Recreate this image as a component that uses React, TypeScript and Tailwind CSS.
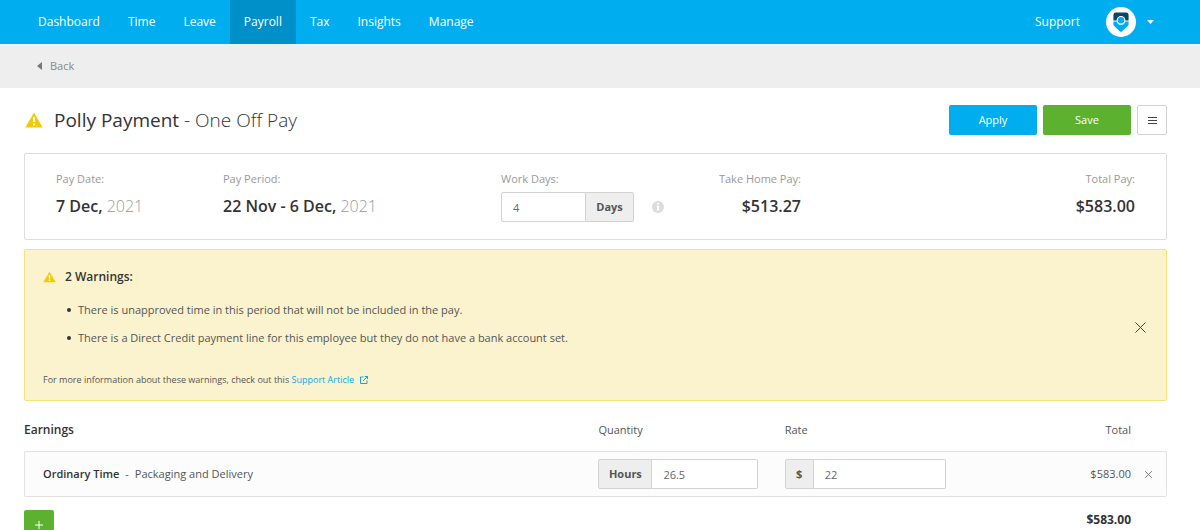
import React, { useState } from 'react';

const navItems = ['Dashboard', 'Time', 'Leave', 'Payroll', 'Tax', 'Insights', 'Manage'];

const warnings = [
  'There is unapproved time in this period that will not be included in the pay.',
  'There is a Direct Credit payment line for this employee but they do not have a bank account set.',
];

const WarningIcon: React.FC<{ className: string }> = ({ className }) => (
  <svg viewBox="0 0 18 16" className={className} aria-hidden="true">
    <path d="M9 0.6 17.7 15.4H0.3Z" fill="#f2cb05" />
    <path d="M8 5.2h2v4.8H8zM8 11.4h2v2H8z" fill="#fff" />
  </svg>
);

const CloseIcon: React.FC<{ className: string }> = ({ className }) => (
  <svg viewBox="0 0 10 10" className={className} aria-hidden="true">
    <path d="M0.4 0.4 9.6 9.6M9.6 0.4 0.4 9.6" fill="none" stroke="currentColor" vectorEffect="non-scaling-stroke" />
  </svg>
);

const Logo: React.FC = () => (
  <svg viewBox="0 0 30 30" className="size-[30px]" aria-hidden="true">
    <circle cx="15" cy="15" r="15" fill="#fff" />
    <path d="M7.4 13.4V8q0-2.4 2.4-2.4h10.4q2.4 0 2.4 2.4v5.4h-3.2a4.4 4.4 0 0 0-8.8 0Z" fill="#0a4766" />
    <path d="M7.4 14.4h3.3a4.4 4.4 0 0 0 8.6 0h3.3v2.8q0 1-.8 1.8l-5.6 5.3q-1.2 1-2.4 0L8.2 19q-.8-.8-.8-1.8Z" fill="#00aeef" />
    <circle cx="15" cy="13.2" r="3.2" fill="#00aeef" />
  </svg>
);

const Header: React.FC = () => (
  <header className="flex h-11 items-center justify-between bg-[#00aeef] pr-[46px] pl-6 text-white">
    <nav className="flex h-full text-[12px]">
      {navItems.map((item) => (
        <a
          key={item}
          href="#"
          className={`flex items-center px-[14px] ${item === 'Payroll' ? 'bg-[#0090c9]' : ''}`}
        >
          {item}
        </a>
      ))}
    </nav>
    <div className="flex items-center">
      <a href="#" className="mr-[26px] text-[12px]">Support</a>
      <button type="button" aria-label="Account" className="flex items-center gap-[11px]">
        <Logo />
        <svg viewBox="0 0 7 4" className="h-1 w-[7px]" aria-hidden="true">
          <path d="M0 0h7L3.5 4Z" fill="#fff" />
        </svg>
      </button>
    </div>
  </header>
);

const PaySummary: React.FC = () => (
  <section className="mt-[18px] grid h-[87px] grid-cols-[167fr_278fr_171fr_129fr_334fr] rounded-xs border border-[#dedede] px-[31px] pt-4 text-[16px] font-semibold text-[#333]">
    <div>
      <h2 className="text-[11px] leading-[18px] font-normal text-[#999]">Pay Date:</h2>
      <p className="mt-1.5 leading-6">
        7 Dec, <span className="font-light text-[#999]">2021</span>
      </p>
    </div>
    <div>
      <h2 className="text-[11px] leading-[18px] font-normal text-[#999]">Pay Period:</h2>
      <p className="mt-1.5 leading-6">
        22 Nov - 6 Dec, <span className="font-light text-[#999]">2021</span>
      </p>
    </div>
    <div className="text-[11px]">
      <label htmlFor="work-days" className="block leading-[18px] font-normal text-[#999]">Work Days:</label>
      <div className="mt-1 flex items-center">
        <input
          id="work-days"
          defaultValue="4"
          className="h-[30px] w-[85px] rounded-l-xs border border-[#d2d2d2] bg-white px-[11px] font-normal text-[#666]"
        />
        <span className="flex h-[30px] w-12 items-center justify-center rounded-r-xs border border-l-0 border-[#d2d2d2] bg-[#eee] font-bold text-[#555]">
          Days
        </span>
        <svg viewBox="0 0 12 12" className="ml-[18px] size-3" aria-hidden="true">
          <circle cx="6" cy="6" r="6" fill="#dcdcdc" />
          <path d="M5 2h2v1.6H5zM4.5 4.8H7v3.6h.6v1.1H4.4V8.4H5V5.8h-.5z" fill="#fff" />
        </svg>
      </div>
    </div>
    <div className="text-right">
      <h2 className="text-[11px] leading-[18px] font-normal text-[#999]">Take Home Pay:</h2>
      <p className="mt-1.5 leading-6">$513.27</p>
    </div>
    <div className="text-right">
      <h2 className="text-[11px] leading-[18px] font-normal text-[#999]">Total Pay:</h2>
      <p className="mt-1.5 leading-6">$583.00</p>
    </div>
  </section>
);

const Warnings: React.FC<{ onClose: () => void }> = ({ onClose }) => (
  <section className="mt-[9px] flex items-center justify-between rounded-xs border border-[#f6e27a] bg-[#fbf3cd] pt-4 pr-5 pb-3 pl-[18px]">
    <div>
      <h2 className="flex items-center gap-[9px] text-[12px] leading-[22px] font-semibold text-[#333]">
        <WarningIcon className="h-3 w-[13px]" />
        2 Warnings:
      </h2>
      <ul className="mt-3 flex flex-col gap-2 pl-6 text-[11px] leading-5 text-[#555]">
        {warnings.map((text) => (
          <li key={text} className="flex items-center gap-[7px]">
            <span className="size-1 rounded-full bg-[#333]" />
            {text}
          </li>
        ))}
      </ul>
      <p className="mt-6 flex items-center text-[9px] leading-4 text-[#555]">
        For more information about these warnings, check out this&nbsp;
        <a href="#" className="flex items-center gap-1.5 text-[#00aeef]">
          Support Article
          <svg viewBox="0 0 8 8" className="size-2" fill="none" stroke="currentColor" aria-hidden="true">
            <path d="M3.5 1H.5v6.5H7V4.5M4.8.5h2.7v2.7M7.5.5 3 5" />
          </svg>
        </a>
      </p>
    </div>
    <button type="button" aria-label="Dismiss warnings" onClick={onClose} className="text-[#444]">
      <CloseIcon className="size-[11px]" />
    </button>
  </section>
);

const Earnings: React.FC = () => (
  <table className="mt-[18px] w-full table-fixed border-separate border-spacing-0 text-[11px] text-[#555]">
    <colgroup>
      <col />
      <col className="w-[16.3%]" />
      <col className="w-[16.3%]" />
      <col className="w-[14%]" />
      <col className="w-9" />
    </colgroup>
    <thead>
      <tr className="h-8 text-left align-top leading-[22px]">
        <th className="text-[12px] font-semibold text-[#333]">Earnings</th>
        <th className="font-normal">Quantity</th>
        <th className="font-normal">Rate</th>
        <th className="text-right font-normal">Total</th>
        <th />
      </tr>
    </thead>
    <tbody>
      <tr className="h-[46px] *:border-y *:border-[#e2e2e2] *:bg-[#fcfcfc]">
        <td className="rounded-l-xs border-l pl-[18px]">
          <span className="font-semibold text-[#333]">Ordinary Time</span>
          <span className="mx-1.5">-</span>
          Packaging and Delivery
        </td>
        <td>
          <div className="flex">
            <label
              htmlFor="hours"
              className="flex h-[30px] w-[54px] items-center justify-center rounded-l-xs border border-[#d2d2d2] bg-[#eee] font-bold"
            >
              Hours
            </label>
            <input
              id="hours"
              defaultValue="26.5"
              className="h-[30px] w-[106px] rounded-r-xs border border-l-0 border-[#d2d2d2] bg-white px-[11px] text-[#666]"
            />
          </div>
        </td>
        <td>
          <div className="flex">
            <label
              htmlFor="rate"
              className="flex h-[30px] w-[29px] items-center justify-center rounded-l-xs border border-[#d2d2d2] bg-[#eee] font-bold"
            >
              $
            </label>
            <input
              id="rate"
              defaultValue="22"
              className="h-[30px] w-[132px] rounded-r-xs border border-l-0 border-[#d2d2d2] bg-white px-[11px] text-[#666]"
            />
          </div>
        </td>
        <td className="text-right">$583.00</td>
        <td className="rounded-r-xs border-r pl-[14px]">
          <button type="button" aria-label="Remove Ordinary Time" className="block text-[#777]">
            <CloseIcon className="size-[7px]" />
          </button>
        </td>
      </tr>
    </tbody>
    <tfoot>
      <tr className="align-top">
        <td className="pt-[13px]">
          <button
            type="button"
            aria-label="Add earning"
            className="flex size-[30px] items-center justify-center rounded-xs bg-[#5cb12e] text-white"
          >
            <svg viewBox="0 0 8 8" className="size-2" stroke="currentColor" aria-hidden="true">
              <path d="M4 0v8M0 4h8" />
            </svg>
          </button>
        </td>
        <td />
        <td />
        <td className="pt-[13px] text-right text-[12px] leading-5 font-bold text-[#333]">$583.00</td>
        <td />
      </tr>
    </tfoot>
  </table>
);

const App: React.FC = () => {
  const [showWarnings, setShowWarnings] = useState(true);

  return (
    <div className="bg-white font-['Open_Sans',sans-serif]">
      <Header />
      <div className="flex h-11 items-center bg-[#eee] px-[37px]">
        <a href="#" className="flex items-center gap-2 text-[11px] text-[#888]">
          <svg viewBox="0 0 5 8" className="h-2 w-[5px]" aria-hidden="true">
            <path d="M5 0v8L0 4Z" fill="#777" />
          </svg>
          Back
        </a>
      </div>

      <main className="pt-[17px] pr-[33px] pl-6">
        <div className="flex items-center justify-between">
          <h1 className="flex items-center gap-[11px] text-[19px] leading-[30px] text-[#333]">
            <WarningIcon className="ml-px h-4 w-[18px]" />
            <span>
              Polly Payment <span className="font-light">- One Off Pay</span>
            </span>
          </h1>
          <div className="flex gap-1.5 text-[11px] font-medium text-white">
            <button type="button" className="h-[30px] w-[88px] rounded-xs bg-[#00aeef]">Apply</button>
            <button type="button" className="h-[30px] w-[88px] rounded-xs bg-[#5cb12e]">Save</button>
            <button
              type="button"
              aria-label="More actions"
              className="flex size-[30px] items-center justify-center rounded-xs border border-[#d2d2d2] text-[#444]"
            >
              <svg viewBox="0 0 9 7" className="h-[7px] w-[9px]" stroke="currentColor" aria-hidden="true">
                <path d="M0 .5h9M0 3.5h9M0 6.5h9" />
              </svg>
            </button>
          </div>
        </div>

        <PaySummary />
        {showWarnings && <Warnings onClose={() => setShowWarnings(false)} />}
        <Earnings />
      </main>
    </div>
  );
};

export default App;
